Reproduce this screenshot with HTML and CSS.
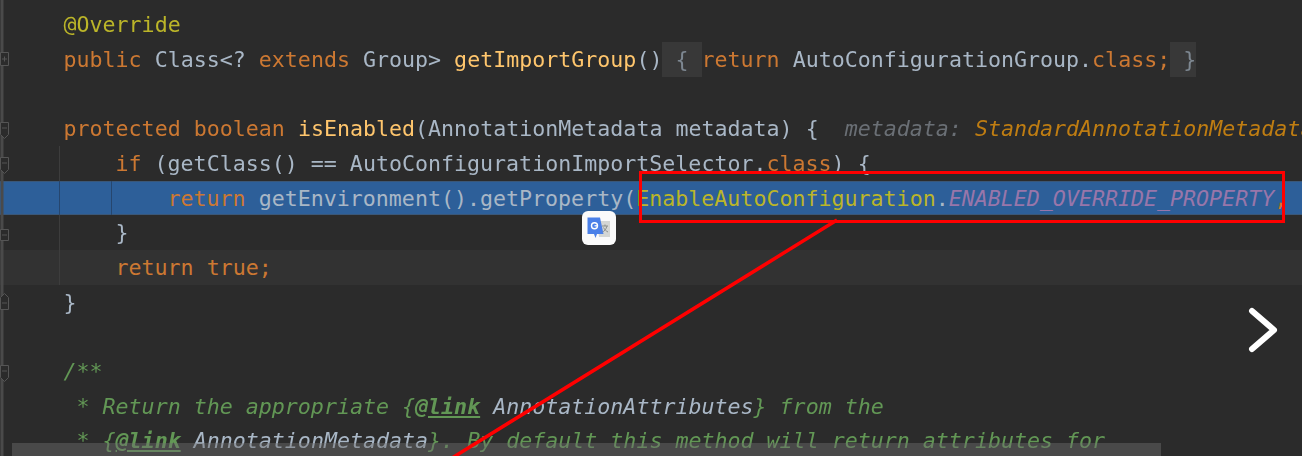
FILE: index.html
```html
<!DOCTYPE html>
<html lang="en">
<head>
<meta charset="utf-8">
<title>Editor</title>
<link rel="stylesheet" href="styles.css">
</head>
<body>
<main class="editor">
  <div class="code">
    <div class="line"><span class="ann">@Override</span></div>
    <div class="line"><span class="kw">public</span> Class&lt;? <span class="kw">extends</span> Group&gt; <span class="fn">getImportGroup</span>()<span class="fold"> { </span><span class="kw">return</span> AutoConfigurationGroup.<span class="kw">class;</span><span class="fold"> }</span></div>
    <div class="line"></div>
    <div class="line"><span class="kw">protected boolean</span> <span class="fn">isEnabled</span>(AnnotationMetadata metadata) {  <span class="hint">metadata: </span><span class="hint-type">StandardAnnotationMetadata</span></div>
    <div class="line guide"><span class="ind"></span><span class="kw">if</span> (getClass() == AutoConfigurationImportSelector.<span class="kw">class</span>) {</div>
    <div class="line selected"><span class="ind2"></span><span class="kw">return</span> getEnvironment().getProperty(<span class="ann">EnableAutoConfiguration</span>.<span class="const">ENABLED_OVERRIDE_PROPERTY</span><span class="kw">,</span></div>
    <div class="line guide"><span class="ind"></span>}</div>
    <div class="line guide current"><span class="ind"></span><span class="kw">return true;</span></div>
    <div class="line">}</div>
    <div class="line"></div>
    <div class="line"><span class="com">/**</span></div>
    <div class="line"><span class="com"> * Return the appropriate {<b class="tag">@link</b> <span class="ref">AnnotationAttributes</span>} from the</span></div>
    <div class="line"><span class="com"> * {<b class="tag">@link</b> <span class="ref">AnnotationMetadata</span>}. By default this method will return attributes for</span></div>
  </div>

  <svg class="gutter" width="12" height="456" viewBox="0 0 12 456" aria-hidden="true">
    <path class="rail" d="M2 0V456"/>
    <path class="mark fill" d="M0.500 52.500H8.500V65.500H0.500Z"/><path class="mark" d="M2 59H7M4.500 56.500V61.500"/>
    <path class="mark fill" d="M0.500 122.500H8.500V134.500L4.500 138.500L0.500 134.500Z"/><path class="mark" d="M2 128H7"/>
    <path class="mark fill" d="M0.500 157.500H8.500V169.500L4.500 173.500L0.500 169.500Z"/><path class="mark" d="M2 163H7"/>
    <path class="mark fill" d="M0.500 240.500V229.500H8.500V240.500Z"/><path class="mark" d="M2 235H7"/>
    <path class="mark fill" d="M0.500 309.500H8.500V297.500L4.500 293.500L0.500 297.500Z"/><path class="mark" d="M2 303H7"/>
    <path class="mark fill" d="M0.500 365.500H8.500V377.500L4.500 381.500L0.500 377.500Z"/><path class="mark" d="M2 371H7"/>
  </svg>

  <div class="scrollbar"></div>
  <div class="callout"></div>
  <svg class="arrow" width="1302" height="456" viewBox="0 0 1302 456" aria-hidden="true">
    <path d="M837 220L452 458"/>
  </svg>

  <div class="translate" aria-hidden="true">
    <svg width="24" height="24" viewBox="0 0 24 24">
      <path fill="#d4d6d4" d="M10 5H23V21H12Z"/>
      <path fill="#4a80e8" d="M0.500 1.500H13L16.500 18H10L8.500 22L7 18H0.500Z"/>
      <circle cx="7.500" cy="9.800" r="3" fill="none" stroke="#fff" stroke-width="1.400"/>
      <path d="M7.500 9.800H11" stroke="#fff" stroke-width="1.200"/>
      <path d="M15 10H21M18 8.500V10M20 10C19 13.500 17.500 15 15.500 16M16.500 11.500C17.500 13.500 19 15 21 16" fill="none" stroke="#8b8f8c" stroke-width="1"/>
    </svg>
  </div>

  <svg class="chevron" width="32" height="48" viewBox="0 0 32 48" aria-hidden="true">
    <path d="M4 5L26 24L4 43"/>
  </svg>
</main>
</body>
</html>
```
FILE: styles.css
```css
* { box-sizing: border-box; }
html, body { margin: 0; height: 100%; overflow: hidden; background: #2b2b2b; }
.editor { position: relative; width: 1302px; height: 456px; overflow: hidden; background: #2b2b2b; }
.code { padding-top: 7.3px; font: 21.63px/36.67px "DejaVu Sans Mono", monospace; color: #a9b7c6; filter: blur(0.4px); }
.line { position: relative; height: 34.67px; padding-left: 63.5px; white-space: pre; }
.selected { background: #2d5f99; box-shadow: inset 0 1px 0 #3a5778, inset 0 -1px 0 #3a5778; }
.current { background: #323232; }
.guide::before, .selected::before { content: ""; position: absolute; top: 0; bottom: 0; left: 59px; width: 1px; background: #3d3d3d; }
.selected::before { background: #26466e; }
.selected::after { content: ""; position: absolute; top: 0; bottom: 0; left: 111px; width: 1px; background: #26466e; }
.ind { display: inline-block; width: 52px; }
.ind2 { display: inline-block; width: 104px; }
.kw { color: #cc7832; }
.fn { color: #ffc66d; }
.ann { color: #bbb529; }
.const { color: #9876aa; font-style: italic; }
.com { color: #629755; font-style: italic; }
.tag { font-weight: bold; text-decoration: underline; }
.ref { color: #a9b7c6; }
.hint { color: #6a6f75; font-style: italic; }
.hint-type { color: #bf7d12; font-style: italic; }
.fold { display: inline-block; height: 34.67px; background: #383838; color: #7d8791; vertical-align: top; }
.gutter { position: absolute; left: 0; top: 0; }
.rail { stroke: #4a4a4a; stroke-width: 3; fill: none; }
.mark { stroke: #555; stroke-width: 1; fill: none; }
.mark.fill { fill: #2b2b2b; }
.scrollbar { position: absolute; left: 12px; top: 443px; width: 1149px; height: 13px; background: rgba(110, 110, 110, 0.45); }
.callout { position: absolute; left: 639px; top: 171px; width: 646px; height: 52px; border: 3px solid #f00; }
.arrow { position: absolute; left: 0; top: 0; }
.arrow path { stroke: #f00; stroke-width: 3.5; fill: none; }
.translate { position: absolute; left: 582px; top: 211px; width: 34px; height: 34px; padding: 5px; display: flex; border-radius: 6px; background: #fafafa; }
.chevron { position: absolute; left: 1248px; top: 306px; }
.chevron path { stroke: #fff; stroke-width: 6; stroke-linecap: round; stroke-linejoin: round; fill: none; }
```
